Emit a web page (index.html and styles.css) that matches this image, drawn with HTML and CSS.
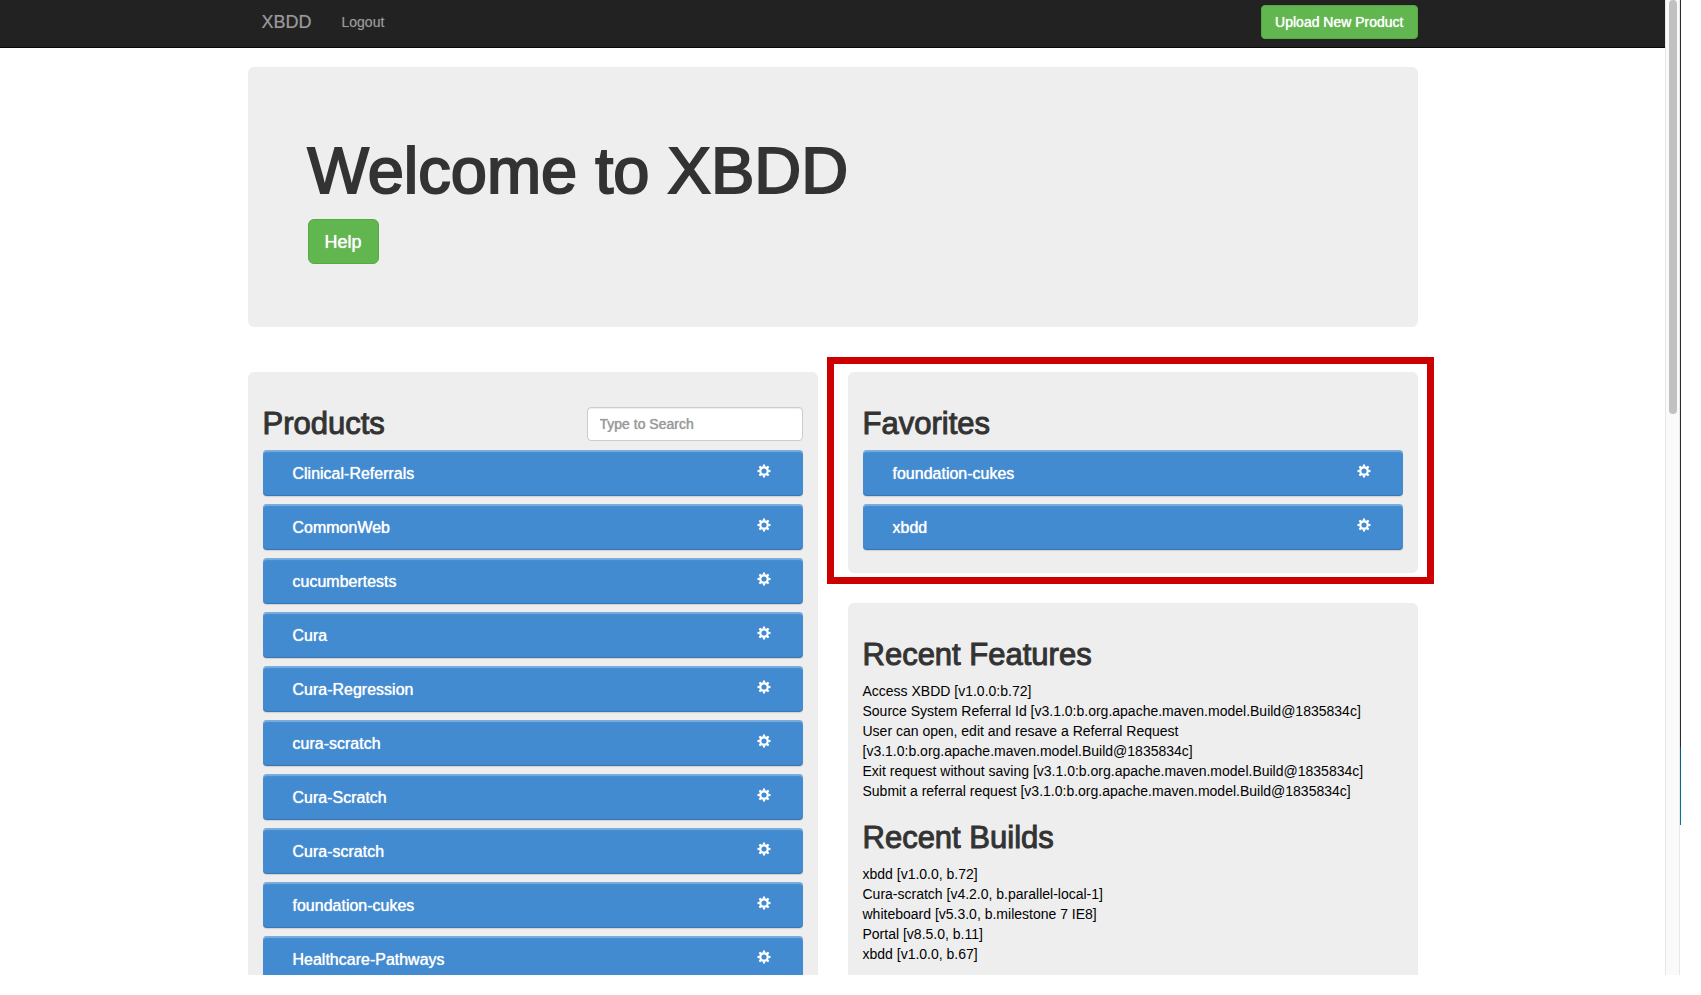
FILE: index.html
```
<!DOCTYPE html>
<html lang="en">
<head>
<meta charset="utf-8">
<title>XBDD</title>
<link rel="stylesheet" href="styles.css">
</head>
<body>
<svg class="symbols" aria-hidden="true">
  <symbol id="cog" viewBox="0 0 14 14">
    <circle cx="7" cy="7" r="3.7" fill="none" stroke="currentColor" stroke-width="2.2"/>
    <g fill="currentColor">
      <path id="tooth" d="M5.7 2.8 6 .5h2l.3 2.3z"/>
      <use href="#tooth" transform="rotate(45 7 7)"/>
      <use href="#tooth" transform="rotate(90 7 7)"/>
      <use href="#tooth" transform="rotate(135 7 7)"/>
      <use href="#tooth" transform="rotate(180 7 7)"/>
      <use href="#tooth" transform="rotate(225 7 7)"/>
      <use href="#tooth" transform="rotate(270 7 7)"/>
      <use href="#tooth" transform="rotate(315 7 7)"/>
    </g>
  </symbol>
</svg>
<div class="window">
  <div class="page">
    <nav class="navbar">
      <div class="container navbar-inner">
        <a class="brand" href="#">XBDD</a>
        <a class="nav-link" href="#">Logout</a>
        <button class="btn btn-upload" type="button">Upload New Product</button>
      </div>
    </nav>
    <main class="container">
      <header class="jumbotron">
        <h1>Welcome to XBDD</h1>
        <button class="btn btn-large" type="button">Help</button>
      </header>
      <div class="columns">
        <section class="card">
          <div class="card-head">
            <h2>Products</h2>
            <input class="search" type="text" placeholder="Type to Search" aria-label="Search products">
          </div>
          <ul class="products">
            <li class="product"><a href="#">Clinical-Referrals</a><button class="cog" type="button" aria-label="Settings"><svg><use href="#cog"/></svg></button></li>
            <li class="product"><a href="#">CommonWeb</a><button class="cog" type="button" aria-label="Settings"><svg><use href="#cog"/></svg></button></li>
            <li class="product"><a href="#">cucumbertests</a><button class="cog" type="button" aria-label="Settings"><svg><use href="#cog"/></svg></button></li>
            <li class="product"><a href="#">Cura</a><button class="cog" type="button" aria-label="Settings"><svg><use href="#cog"/></svg></button></li>
            <li class="product"><a href="#">Cura-Regression</a><button class="cog" type="button" aria-label="Settings"><svg><use href="#cog"/></svg></button></li>
            <li class="product"><a href="#">cura-scratch</a><button class="cog" type="button" aria-label="Settings"><svg><use href="#cog"/></svg></button></li>
            <li class="product"><a href="#">Cura-Scratch</a><button class="cog" type="button" aria-label="Settings"><svg><use href="#cog"/></svg></button></li>
            <li class="product"><a href="#">Cura-scratch</a><button class="cog" type="button" aria-label="Settings"><svg><use href="#cog"/></svg></button></li>
            <li class="product"><a href="#">foundation-cukes</a><button class="cog" type="button" aria-label="Settings"><svg><use href="#cog"/></svg></button></li>
            <li class="product"><a href="#">Healthcare-Pathways</a><button class="cog" type="button" aria-label="Settings"><svg><use href="#cog"/></svg></button></li>
          </ul>
        </section>
        <div class="side">
          <section class="card highlighted">
            <div class="card-head"><h2>Favorites</h2></div>
            <ul class="products">
              <li class="product"><a href="#">foundation-cukes</a><button class="cog" type="button" aria-label="Settings"><svg><use href="#cog"/></svg></button></li>
              <li class="product"><a href="#">xbdd</a><button class="cog" type="button" aria-label="Settings"><svg><use href="#cog"/></svg></button></li>
            </ul>
          </section>
          <section class="card">
            <div class="card-head"><h2>Recent Features</h2></div>
            <ul class="recent">
              <li><a href="#">Access XBDD [v1.0.0:b.72]</a></li>
              <li><a href="#">Source System Referral Id [v3.1.0:b.org.apache.maven.model.Build@1835834c]</a></li>
              <li><a href="#">User can open, edit and resave a Referral Request [v3.1.0:b.org.apache.maven.model.Build@1835834c]</a></li>
              <li><a href="#">Exit request without saving [v3.1.0:b.org.apache.maven.model.Build@1835834c]</a></li>
              <li><a href="#">Submit a referral request [v3.1.0:b.org.apache.maven.model.Build@1835834c]</a></li>
            </ul>
            <div class="card-head"><h2>Recent Builds</h2></div>
            <ul class="recent">
              <li><a href="#">xbdd [v1.0.0, b.72]</a></li>
              <li><a href="#">Cura-scratch [v4.2.0, b.parallel-local-1]</a></li>
              <li><a href="#">whiteboard [v5.3.0, b.milestone 7 IE8]</a></li>
              <li><a href="#">Portal [v8.5.0, b.11]</a></li>
              <li><a href="#">xbdd [v1.0.0, b.67]</a></li>
            </ul>
          </section>
        </div>
      </div>
    </main>
  </div>
  <div class="scrollbar"><div class="thumb"></div></div>
  <div class="edge"></div>
</div>
</body>
</html>
```
FILE: styles.css
```
* {
  box-sizing: border-box;
}

body {
  margin: 0;
  background: #fff;
  color: #333;
  font: 14px/20px "Liberation Sans", Arial, sans-serif;
}

h1,
h2,
ul {
  margin: 0;
  padding: 0;
  font-weight: 400;
  list-style: none;
}

a {
  color: inherit;
  text-decoration: none;
}

button,
input {
  font: inherit;
}

.symbols {
  position: absolute;
  width: 0;
  height: 0;
}

/* Window frame */

.window {
  display: flex;
  height: calc(100vh - 20px);
  margin-right: 20px;
  overflow: hidden;
}

.page {
  flex: 1;
  min-width: 0;
}

.scrollbar {
  width: 15px;
  padding-left: 3px;
  background: #fafafa;
  border: solid #e7e7e7;
  border-width: 0 1px;
}

.thumb {
  width: 8px;
  height: 42.5%;
  background: #c1c1c1;
  border-radius: 4px;
}

.edge {
  width: 1px;
  background: linear-gradient(#2a2a2a 76.6%, #005f86 76.6%, #0079a3 84.6%, #fff 84.6%);
}

.container {
  width: 100%;
  max-width: 1170px;
  margin: 0 auto;
}

/* Top bar */

.navbar {
  margin-bottom: 19px;
  background: #222;
  border-bottom: 1px solid #080808;
}

.navbar-inner {
  display: flex;
  align-items: center;
  gap: 30px;
  padding: 5px 0 8px 14px;
  color: #999;
}

.brand {
  font-size: 18px;
}

.brand,
.nav-link {
  text-shadow: 0 0 1px rgba(153, 153, 153, 0.5);
}

.btn {
  padding: 6px 12px;
  background: #62b650;
  border: 1px solid #55ab42;
  border-radius: 4px;
  color: #fff;
  text-shadow: 0 0 1px #fff;
}

.btn-upload {
  margin-left: auto;
  padding: 6px 13px;
}

.btn-large {
  padding: 11px 16px 9px;
  border-radius: 6px;
  font-size: 18px;
  line-height: 23px;
}

/* Panels */

.jumbotron {
  margin-bottom: 45px;
  padding: 72px 60px 63px;
  background: #eee;
  border-radius: 6px;
}

h1 {
  margin-bottom: 16px;
  font-size: 65px;
  line-height: 64px;
  -webkit-text-stroke: 2px;
}

.jumbotron .btn {
  display: block;
}

.columns {
  display: grid;
  grid-template-columns: 1fr 1fr;
  gap: 30px;
  align-items: start;
}

.side {
  display: grid;
  gap: 30px;
}

.card {
  padding: 15px 15px 23px;
  background: #eee;
  border-radius: 6px;
}

.highlighted {
  position: relative;
}

.highlighted::after {
  content: "";
  position: absolute;
  inset: -15px -16px -11px -21px;
  border: 7px solid #c00;
  pointer-events: none;
}

.card-head {
  display: flex;
  justify-content: space-between;
  height: 63px;
  padding-top: 20px;
}

h2 {
  font-size: 31px;
  line-height: 33px;
  -webkit-text-stroke: 1px;
}

.search {
  width: 40%;
  height: 34px;
  padding: 6px 12px;
  background: #fff;
  border: 1px solid #ccc;
  border-radius: 4px;
  box-shadow: inset 0 1px 1px rgba(0, 0, 0, 0.075);
}

.search::placeholder {
  color: #999;
  opacity: 1;
  text-shadow: 0 0 1px #999;
}

.products {
  display: grid;
  gap: 8px;
}

.product {
  display: flex;
  justify-content: space-between;
  height: 46px;
  padding: 12px 32px 12px 30px;
  background: #428bd0;
  border-radius: 4px;
  box-shadow: inset 0 2px 1px rgba(255, 255, 255, 0.3), inset 0 -1px 1px rgba(0, 0, 0, 0.15), 0 1px 1px rgba(0, 0, 0, 0.12);
  color: #fff;
  font-size: 16px;
  line-height: 24px;
  text-shadow: 0 0 1px #fff;
}

.cog {
  height: 14px;
  margin-top: 2px;
  padding: 0;
  background: none;
  border: 0;
  color: inherit;
}

.cog svg {
  display: block;
  width: 14px;
  height: 14px;
}

.recent {
  color: #000;
}
```
